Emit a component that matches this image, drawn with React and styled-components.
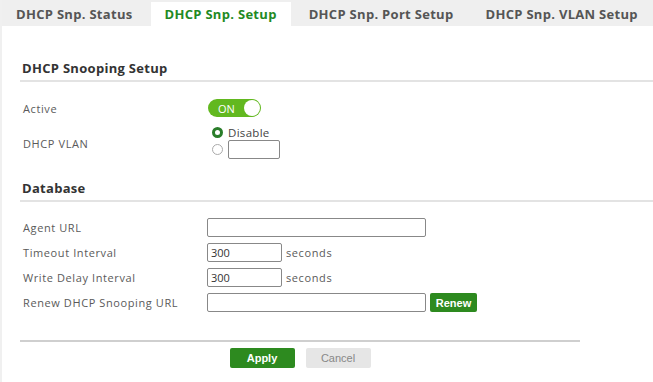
import React from 'react';
import styled, { createGlobalStyle } from 'styled-components';

const GlobalStyle = createGlobalStyle`
  html, body { margin: 0; padding: 0; background: #fff; }
  body { font-family: "Open Sans", "Liberation Sans", sans-serif; }
`;

const tabs = ['DHCP Snp. Status', 'DHCP Snp. Setup', 'DHCP Snp. Port Setup', 'DHCP Snp. VLAN Setup'];

const App = () => {
  return (
    <Page>
      <GlobalStyle />
      <TabBar>
        {tabs.map((t, i) => (
          <Tab key={t} active={i === 1}>{t}</Tab>
        ))}
      </TabBar>
      <Content>
        <SectionTitle>DHCP Snooping Setup</SectionTitle>
        <Form top={13}>
          <Row h={26}>
            <Label>Active</Label>
            <Toggle>
              <span>ON</span>
              <Knob />
            </Toggle>
          </Row>
          <Row h={44}>
            <Label>DHCP VLAN</Label>
            <RadioGroup>
              <RadioLine>
                <Radio checked />
                <span>Disable</span>
              </RadioLine>
              <RadioLine>
                <Radio />
                <Input w={52} />
              </RadioLine>
            </RadioGroup>
          </Row>
        </Form>
        <SectionTitle top={14}>Database</SectionTitle>
        <Form top={13}>
          <Row h={25}>
            <Label>Agent URL</Label>
            <Input w={219} />
          </Row>
          <Row h={25}>
            <Label>Timeout Interval</Label>
            <Input w={75} defaultValue="300" />
            <Unit>seconds</Unit>
          </Row>
          <Row h={25}>
            <Label>Write Delay Interval</Label>
            <Input w={75} defaultValue="300" />
            <Unit>seconds</Unit>
          </Row>
          <Row h={25}>
            <Label>Renew DHCP Snooping URL</Label>
            <Input w={219} />
            <SmallButton>Renew</SmallButton>
          </Row>
        </Form>
        <Footer>
          <Button primary>Apply</Button>
          <Button>Cancel</Button>
        </Footer>
      </Content>
    </Page>
  );
};

const Page = styled.div`
  width: 653px;
  height: 382px;
  overflow: hidden;
  background: #fff;
  border-left: 2px solid #f0f0f0;
  box-sizing: border-box;
`;

const TabBar = styled.div`
  display: flex;
  gap: 4px;
  height: 26px;
  background: #efefef;
  align-items: flex-end;
  white-space: nowrap;
`;

const Tab = styled.div`
  height: 24px;
  line-height: 24px;
  padding: 0 14px;
  font-size: 13px;
  font-weight: 700;
  letter-spacing: 0.3px;
  color: ${(p) => (p.active ? '#1f8a24' : '#555')};
  background: ${(p) => (p.active ? '#fff' : 'transparent')};
`;

const Content = styled.div`
  padding: 33px 0 0 18px;
`;

const SectionTitle = styled.div`
  margin-top: ${(p) => p.top || 0}px;
  font-size: 13px;
  font-weight: 700;
  letter-spacing: 0.3px;
  color: #333;
  line-height: 18px;
  padding: 0 0 3px 2px;
  border-bottom: 2px solid #e3e3e3;
`;

const Form = styled.div`
  margin-top: ${(p) => p.top}px;
  padding-left: 3px;
  display: flex;
  flex-direction: column;
`;

const Row = styled.div`
  display: grid;
  grid-template-columns: 184px auto auto 1fr;
  align-items: center;
  height: ${(p) => p.h}px;
`;

const Label = styled.div`
  font-size: 11px;
  letter-spacing: 0.6px;
  color: #5a5a5a;
`;

const Toggle = styled.div`
  width: 53px;
  height: 18px;
  border-radius: 9px;
  background: #62b81f;
  display: flex;
  align-items: center;
  justify-content: space-between;
  padding: 0 1px 0 10px;
  box-sizing: border-box;
  color: #fff;
  font-size: 11px;
  margin-left: 1px;
`;

const Knob = styled.div`
  width: 16px;
  height: 16px;
  border-radius: 50%;
  background: #fff;
`;

const RadioGroup = styled.div`
  display: flex;
  flex-direction: column;
  margin-left: 5px;
  margin-top: -3px;
`;

const RadioLine = styled.label`
  display: flex;
  align-items: center;
  gap: 5px;
  font-size: 11.5px;
  letter-spacing: 0.3px;
  line-height: 15px;
  color: #444;
`;

const Radio = styled.span`
  width: 11px;
  height: 11px;
  border-radius: 50%;
  box-sizing: border-box;
  border: ${(p) => (p.checked ? '3px solid #2a7d2a' : '1px solid #aaa')};
  background: #fff;
`;

const Input = styled.input`
  width: ${(p) => p.w}px;
  height: 19px;
  box-sizing: border-box;
  border: 1px solid #888;
  border-radius: 2px;
  font-family: "Open Sans", "Liberation Sans", sans-serif;
  font-size: 11px;
  color: #333;
  padding: 0 3px;
  outline: none;
`;

const Unit = styled.span`
  font-size: 11px;
  letter-spacing: 0.6px;
  color: #5a5a5a;
  margin-left: 4px;
`;

const SmallButton = styled.button`
  margin-left: 4px;
  height: 19px;
  width: 47px;
  border: none;
  border-radius: 2px;
  background: #2d8a1f;
  color: #fff;
  font-family: "Liberation Sans", sans-serif;
  font-weight: 700;
  font-size: 11px;
  padding: 0;
`;

const Footer = styled.div`
  width: 560px;
  margin-top: 25px;
  border-top: 2px solid #cfcfcf;
  padding-top: 6px;
  display: flex;
  justify-content: center;
  gap: 11px;
`;

const Button = styled.button`
  width: 65px;
  height: 20px;
  border: none;
  border-radius: 2px;
  background: ${(p) => (p.primary ? '#2d8a1f' : '#e6e6e6')};
  color: ${(p) => (p.primary ? '#fff' : '#888')};
  font-family: "Liberation Sans", sans-serif;
  font-weight: ${(p) => (p.primary ? 700 : 400)};
  font-size: 11px;
  padding: 0;
`;

export default App;
